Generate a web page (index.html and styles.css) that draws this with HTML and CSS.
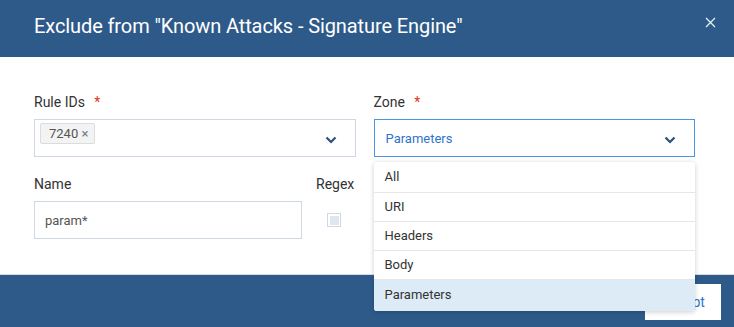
FILE: index.html
```html
<!DOCTYPE html>
<html lang="en">
<head>
  <meta charset="UTF-8">
  <title>Exclude</title>
  <link rel="stylesheet" href="styles.css">
</head>
<body>
  <div class="modal">
    <header class="modal-header">
      <h1>Exclude from "Known Attacks - Signature Engine"</h1>
      <svg class="close" width="11" height="11" viewBox="0 0 11 11"><path d="M1 1 L10 10 M10 1 L1 10" stroke="#e8eef5" stroke-width="1.3"/></svg>
    </header>

    <section class="modal-body">
      <div class="row">
        <div class="field">
          <label>Rule IDs <span class="req">*</span></label>
          <div class="select">
            <span class="tag">7240 <span class="tag-x">&times;</span></span>
            <svg class="chevron" width="12" height="8" viewBox="0 0 12 8"><path d="M1.5 1.5 L6 6 L10.5 1.5" fill="none" stroke="#2d4f7c" stroke-width="2.2"/></svg>
          </div>
        </div>
        <div class="field zone">
          <label>Zone <span class="req">*</span></label>
          <div class="select open">
            <span class="value">Parameters</span>
            <svg class="chevron" width="12" height="8" viewBox="0 0 12 8"><path d="M1.5 1.5 L6 6 L10.5 1.5" fill="none" stroke="#2d4f7c" stroke-width="2.2"/></svg>
          </div>
          <ul class="menu">
            <li>All</li>
            <li>URI</li>
            <li>Headers</li>
            <li>Body</li>
            <li class="active">Parameters</li>
          </ul>
        </div>
      </div>
      <div class="row second">
        <div class="field name">
          <label>Name</label>
          <input type="text" value="param*">
        </div>
        <div class="field regex">
          <label>Regex</label>
          <span class="checkbox"></span>
        </div>
      </div>
    </section>

    <footer class="modal-footer">
      <button>Accept</button>
    </footer>
  </div>
</body>
</html>
```

FILE: styles.css
```css
body {
  margin: 0;
  font-family: Roboto, "Liberation Sans", sans-serif;
  background: #fff;
}

.modal {
  width: 734px;
  height: 327px;
  display: flex;
  flex-direction: column;
  overflow: hidden;
}

.modal-header {
  background-color: #2e5a8a;
  color: #fff;
  height: 57px;
  display: flex;
  align-items: center;
  justify-content: space-between;
  padding: 0 18px 0 34px;
  box-sizing: border-box;
}

.modal-header h1 {
  margin: 0 0 5px;
  font-size: 20px;
  font-weight: 400;
  letter-spacing: -0.1px;
}

.close {
  margin-bottom: 12px;
}

.modal-body {
  flex: 1;
  padding: 37px 39px 0 34px;
}

.row {
  display: flex;
  gap: 18px;
}

.row.second {
  margin-top: 19px;
  gap: 14px;
}

.field {
  display: flex;
  flex-direction: column;
  flex: 1;
}

.field label {
  font-size: 14px;
  color: #333;
  height: 16px;
  line-height: 16px;
  margin-bottom: 9px;
}

.req {
  color: #e8311b;
  margin-left: 6px;
}

.select {
  height: 38px;
  border: 1px solid #cfd9e4;
  box-sizing: border-box;
  display: flex;
  align-items: center;
  padding: 0 18px 0 5px;
  position: relative;
}

.select.open {
  border-color: #4a95e6;
  padding-left: 11px;
}

.tag {
  align-self: flex-start;
  margin-top: 3px;
  height: 19px;
  line-height: 19px;
  padding: 0 6px 0 8px;
  background: #f3f3f3;
  border: 1px solid #dcdcdc;
  border-radius: 2px;
  font-size: 13px;
  color: #555;
}

.tag-x {
  color: #6b7d93;
  font-size: 13px;
}

.value {
  font-size: 13px;
  color: #2f74c8;
}

.chevron {
  margin-left: auto;
  margin-top: 3px;
}

.zone {
  position: relative;
}

.menu {
  position: absolute;
  top: 68px;
  left: 0;
  width: 321px;
  margin: 0;
  padding: 0;
  list-style: none;
  background: #fff;
  border-radius: 3px;
  box-shadow: 0 1px 5px rgba(0, 0, 0, 0.2);
  z-index: 5;
  overflow: hidden;
}

.menu li {
  height: 28px;
  line-height: 28px;
  padding-left: 11px;
  font-size: 13px;
  color: #333;
  border-top: 1px solid #e6e6e6;
}

.menu li:first-child {
  border-top: none;
  height: 30px;
  line-height: 30px;
}

.menu li.active {
  background: #ddebf7;
  height: 31px;
  line-height: 29px;
}

.name {
  flex: 0 0 268px;
}

.name input {
  height: 38px;
  box-sizing: border-box;
  border: 1px solid #cfd9e4;
  padding: 0 10px;
  font-family: inherit;
  font-size: 13px;
  color: #555;
  outline: none;
}

.regex {
  flex: 0 0 auto;
  align-items: center;
}

.checkbox {
  width: 14px;
  height: 14px;
  border: 1px solid #cfd9e4;
  box-sizing: border-box;
  background: #fff;
  margin-top: 12px;
  margin-left: -2px;
  display: flex;
  align-items: center;
  justify-content: center;
}

.checkbox::after {
  content: "";
  width: 9px;
  height: 9px;
  background: #dfe6ee;
}

.modal-footer {
  background-color: #2e5a8a;
  height: 52px;
  display: flex;
  justify-content: flex-end;
  align-items: center;
  padding-right: 13px;
  border-top: 1px solid #d8dde3;
}

.modal-footer button {
  background: #fff;
  color: #2f74c8;
  border: none;
  width: 76px;
  height: 36px;
  font-family: inherit;
  font-size: 14px;
  margin-top: 2px;
}
```
